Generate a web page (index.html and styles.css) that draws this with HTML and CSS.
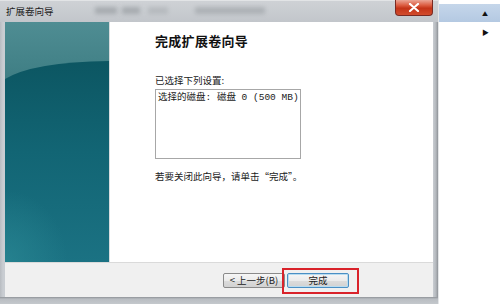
FILE: index.html
```html
<!DOCTYPE html>
<html lang="zh-CN">
<head>
<meta charset="utf-8">
<title>扩展卷向导</title>
<link rel="stylesheet" href="styles.css">
</head>
<body>
<div class="desk">
  <div class="window">
    <div class="titlebar">
      <span class="title">扩展卷向导</span>
      <span class="ghost g1"></span><span class="ghost g2"></span><span class="ghost g3"></span><span class="ghost g4"></span>
      <button class="close" aria-label="关闭">
        <svg width="12" height="9" viewBox="0 0 12 9"><path d="M2 1 L10 8 M10 1 L2 8" stroke="#fff" stroke-width="2.2" stroke-linecap="round"/></svg>
      </button>
    </div>
    <div class="client">
      <div class="main">
        <div class="banner">
          <svg width="104" height="240" viewBox="0 0 104 240">
            <defs>
              <linearGradient id="top" x1="0" y1="0" x2="0" y2="1">
                <stop offset="0" stop-color="#4f8d93"/>
                <stop offset="0.3" stop-color="#3a7a80"/>
                <stop offset="1" stop-color="#1b6a76"/>
              </linearGradient>
              <linearGradient id="deep" x1="0" y1="0" x2="0" y2="1">
                <stop offset="0" stop-color="#0c5662"/>
                <stop offset="0.45" stop-color="#126574"/>
                <stop offset="1" stop-color="#1b7283"/>
              </linearGradient>
              <radialGradient id="glow" cx="0" cy="1" r="0.6">
                <stop offset="0" stop-color="#2a8894" stop-opacity="0.7"/>
                <stop offset="1" stop-color="#2a8894" stop-opacity="0"/>
              </radialGradient>
            </defs>
            <rect width="104" height="240" fill="url(#top)"/>
            <path d="M0 57 Q28 40 104 39 L104 240 L0 240 Z" fill="url(#deep)"/>
            <rect y="120" width="104" height="120" fill="url(#glow)"/>
          </svg>
        </div>
        <div class="page">
          <h1 class="heading">完成扩展卷向导</h1>
          <p class="label">已选择下列设置:</p>
          <div class="listbox">选择的磁盘: 磁盘 0 (500 MB)</div>
          <p class="hint">若要关闭此向导，请单击“完成”。</p>
        </div>
      </div>
      <div class="footer">
        <button class="btn">&lt; 上一步(B)</button>
        <div class="finish-wrap">
          <button class="btn default">完成</button>
          <span class="mark"></span>
        </div>
      </div>
    </div>
    <div class="bottom-frame"></div>
  </div>
  <div class="side">
    <div class="side-head"><span class="up">▲</span></div>
    <div class="side-row"><span class="right">▶</span></div>
  </div>
</div>
</body>
</html>
```
FILE: styles.css
```css
html, body {
  margin: 0;
  padding: 0;
}
body {
  width: 500px;
  height: 304px;
  overflow: hidden;
  background: #fff;
  font-family: "Noto Sans CJK SC", "DejaVu Sans", sans-serif;
  color: #1a1a1a;
}
.desk {
  display: flex;
  height: 304px;
}
.window {
  width: 438px;
  height: 304px;
  display: flex;
  flex-direction: column;
  background: linear-gradient(to right, #b8bcc1 0, #c9cdd2 3px, #c9cdd2 433px, #b3b7bc 436px, #8e9297 438px);
}
.titlebar {
  position: relative;
  height: 22px;
  display: flex;
  align-items: center;
  padding: 0 5px 0 6px;
  background: linear-gradient(#cfd2d6, #c2c6cb);
  box-shadow: inset 0 1px 0 #e2e4e6;
}
.title {
  font-size: 9.5px;
  line-height: 12px;
  color: #222;
  position: relative;
  z-index: 1;
}
.ghost {
  position: absolute;
  height: 7px;
  top: 7px;
  background: #8c9196;
  filter: blur(2px);
  opacity: 0.55;
}
.g1 { left: 95px; width: 22px; }
.g2 { left: 122px; width: 18px; }
.g3 { left: 148px; width: 20px; opacity: 0.3; }
.g4 { left: 195px; width: 70px; opacity: 0.45; }
.close {
  margin-left: auto;
  align-self: flex-start;
  width: 38px;
  height: 16px;
  padding: 0;
  border: 1px solid #7a2a22;
  border-top: none;
  border-radius: 0 0 4px 4px;
  background: linear-gradient(#eba595 0, #dc5d42 35%, #c43418 55%, #d24c2d 100%);
  display: flex;
  align-items: center;
  justify-content: center;
  position: relative;
  z-index: 1;
}
.client {
  margin: 0 5px;
  display: flex;
  flex-direction: column;
}
.main {
  height: 240px;
  display: flex;
  background: #fff;
}
.banner {
  width: 104px;
  height: 240px;
  border-right: 1px solid #d8dcde;
}
.banner svg {
  display: block;
}
.page {
  flex: 1;
  padding: 9px 0 0 45px;
}
.heading {
  margin: 0;
  font-size: 13px;
  line-height: 18px;
  letter-spacing: 0.3px;
  font-weight: bold;
  color: #111;
  padding-top: 1px;
}
.label {
  margin: 24px 0 0 0;
  font-size: 9.5px;
  line-height: 12px;
}
.listbox {
  margin-top: 3px;
  width: 142px;
  height: 66px;
  border: 1px solid #a7a7a7;
  padding: 2px 0 0 2px;
  font-family: "Liberation Mono", "Noto Sans CJK SC", monospace;
  font-size: 9.5px;
  line-height: 11px;
  white-space: nowrap;
}
.hint {
  margin: 11px 0 0 0;
  font-size: 9.5px;
  line-height: 12px;
}
.footer {
  height: 34px;
  border-top: 1px solid #dadada;
  background: #f0f0f0;
  display: flex;
  align-items: center;
  justify-content: flex-end;
  gap: 2px;
  padding-right: 84px;
}
.btn {
  width: 62px;
  height: 15px;
  padding: 0;
  border: 1px solid #8a8a8a;
  border-radius: 2px;
  background: linear-gradient(#f6f6f6 0, #ebebeb 50%, #dcdcdc 51%, #d2d2d2 100%);
  font-family: "Noto Sans CJK SC", sans-serif;
  font-size: 9.5px;
  line-height: 13px;
  color: #222;
}
.btn.default {
  border-color: #4a8fc4;
  box-shadow: inset 0 0 0 1px #b8dcf0;
}
.finish-wrap {
  position: relative;
  display: flex;
}
.mark {
  position: absolute;
  left: -5px;
  top: -5px;
  width: 73px;
  height: 22px;
  border: 2px solid #d9222a;
  pointer-events: none;
}
.bottom-frame {
  height: 7px;
  background: linear-gradient(#8f9398 0, #b9bdc2 2px, #c4c8cc 100%);
}
.side {
  flex: 1;
  background: #fff;
  border-left: 1px solid #e4e6e8;
}
.side-head {
  margin-top: 4px;
  height: 18px;
  background: linear-gradient(#c5d6ea, #b4c9e2);
  display: flex;
  align-items: center;
  justify-content: flex-end;
  padding-right: 12px;
}
.up {
  font-size: 6px;
  color: #111;
}
.side-row {
  height: 20px;
  display: flex;
  align-items: center;
  justify-content: flex-end;
  padding-right: 11px;
}
.right {
  font-size: 7px;
  color: #111;
}
```
